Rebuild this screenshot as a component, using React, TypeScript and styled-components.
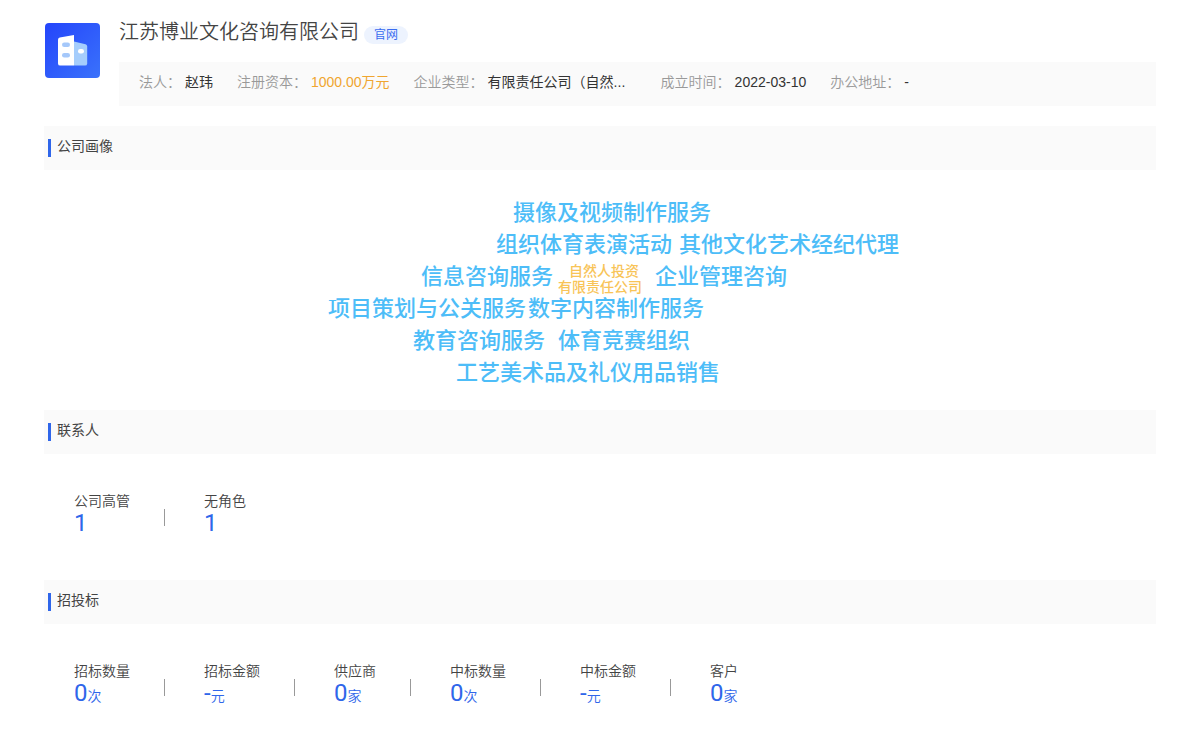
import React from "react";
import styled, { createGlobalStyle } from "styled-components";

const GlobalStyle = createGlobalStyle`
  * { box-sizing: border-box; }
  body {
    margin: 0;
    background: #fff;
    color: #444;
    font-family: "Liberation Sans", "Noto Sans CJK SC", sans-serif;
    font-size: 14px;
    line-height: 20px;
  }
  h1, h2, dl, dt, dd { margin: 0; font-weight: inherit; }
`;

const Page = styled.main`
  padding: 18px 44px 0;
`;

const Header = styled.header`
  display: flex;
  gap: 19px;
  padding-left: 1px;
  margin-bottom: 20px;
`;

const Logo = styled.svg`
  flex: none;
  width: 55px;
  height: 55px;
  margin-top: 5px;
`;

const HeaderBody = styled.div`
  flex: 1;
  min-width: 0;
`;

const TitleRow = styled.div`
  display: flex;
  align-items: flex-start;
  gap: 5px;
  height: 44px;
`;

const Title = styled.h1`
  font-size: 20px;
  line-height: 28px;
  font-weight: 350;
`;

const SiteLink = styled.a`
  margin-top: 8px;
  padding: 0 10px;
  border-radius: 9px;
  background: #edf3fe;
  color: #3a6cf0;
  font-size: 12px;
  line-height: 18px;
  height: 18px;
  text-decoration: none;
`;

const InfoBar = styled.dl`
  display: flex;
  flex-wrap: wrap;
  column-gap: 24px;
  padding: 10px 20px 14px;
  background: #fafafa;
`;

const InfoItem = styled.div`
  display: flex;
  gap: 4px;
`;

const InfoLabel = styled.dt`
  color: #999;
  font-weight: 350;
`;

const InfoValue = styled.dd<{ $accent?: boolean; $wide?: boolean }>`
  color: ${(p) => (p.$accent ? "#f0a52f" : "#333")};
  min-width: ${(p) => (p.$wide ? "149px" : "0")};
  white-space: nowrap;
`;

const SectionHead = styled.div`
  display: flex;
  align-items: flex-start;
  gap: 6px;
  height: 44px;
  padding: 10px 4px;
  background: #fafafa;
  &::before {
    content: "";
    width: 3px;
    height: 18px;
    margin-top: 3px;
    background: #2f66ea;
  }
`;

const SectionTitle = styled.h2`
  font-size: 14px;
`;

const Cloud = styled.div`
  position: relative;
  height: 240px;
`;

/* Words are placed by their offset from the centre of the cloud. */
const Word = styled.span<{ $x: number; $y: number }>`
  position: absolute;
  left: calc(50% + ${(p) => p.$x}px);
  top: ${(p) => p.$y}px;
  color: #4dbdf8;
  font-size: 22px;
  line-height: 32px;
  font-weight: 500;
  white-space: nowrap;
`;

const CoreWord = styled(Word)`
  color: #f8c458;
  font-size: 14px;
  line-height: 16px;
`;

const Stats = styled.dl`
  display: flex;
  padding: 37px 30px 45px;
`;

const Stat = styled.div`
  display: flex;
  & + &::before {
    content: "";
    width: 1px;
    height: 17px;
    margin: 18px 39px 0 34px;
    background: #999;
  }
`;

const StatLabel = styled.dt`
  font-weight: 350;
`;

const StatValue = styled.dd`
  height: 24px;
  color: #2f66ea;
  font-family: Roboto, "Noto Sans CJK SC", sans-serif;
  font-weight: 350;
  line-height: 24px;
`;

const Figure = styled.span`
  font-size: 24px;
  font-weight: 400;
`;

type StatData = { label: string; value: string; unit?: string };

const info = [
  { label: "法人", value: "赵玮" },
  { label: "注册资本", value: "1000.00万元", accent: true },
  { label: "企业类型", value: "有限责任公司（自然...", wide: true },
  { label: "成立时间", value: "2022-03-10" },
  { label: "办公地址", value: "-" },
];

const words = [
  { text: "摄像及视频制作服务", x: -87, y: 27 },
  { text: "组织体育表演活动", x: -104, y: 59 },
  { text: "其他文化艺术经纪代理", x: 79, y: 59 },
  { text: "信息咨询服务", x: -179, y: 91 },
  { text: "企业管理咨询", x: 55, y: 91 },
  { text: "项目策划与公关服务", x: -272, y: 123 },
  { text: "数字内容制作服务", x: -72, y: 123 },
  { text: "教育咨询服务", x: -187, y: 155 },
  { text: "体育竞赛组织", x: -42, y: 155 },
  { text: "工艺美术品及礼仪用品销售", x: -144, y: 187 },
];

const coreWords = [
  { text: "自然人投资", x: -31, y: 93 },
  { text: "有限责任公司", x: -42, y: 109 },
];

const contacts: StatData[] = [
  { label: "公司高管", value: "1" },
  { label: "无角色", value: "1" },
];

const bids: StatData[] = [
  { label: "招标数量", value: "0", unit: "次" },
  { label: "招标金额", value: "-", unit: "元" },
  { label: "供应商", value: "0", unit: "家" },
  { label: "中标数量", value: "0", unit: "次" },
  { label: "中标金额", value: "-", unit: "元" },
  { label: "客户", value: "0", unit: "家" },
];

function StatList({ items }: { items: StatData[] }) {
  return (
    <Stats>
      {items.map((s) => (
        <Stat key={s.label}>
          <div>
            <StatLabel>{s.label}</StatLabel>
            <StatValue>
              <Figure>{s.value}</Figure>
              {s.unit}
            </StatValue>
          </div>
        </Stat>
      ))}
    </Stats>
  );
}

function CompanyLogo() {
  return (
    <Logo viewBox="0 0 55 55" aria-hidden="true">
      <defs>
        <linearGradient id="tile" x1="0" y1="0" x2="1" y2="1">
          <stop offset="0" stopColor="#2445fb" />
          <stop offset="1" stopColor="#3a72fb" />
        </linearGradient>
      </defs>
      <rect width="55" height="55" rx="4" fill="url(#tile)" />
      <path d="M29 18.500l11.500 2.700q1.700.5 1.700 2.200v17q0 2.200-2.200 2.200H29z" fill="#a5cdfc" />
      <path d="M14.800 14.600L29 12v30.600H15.200q-2.200 0-2.200-2.200V16.800q0-1.800 1.800-2.200z" fill="#fff" />
      <rect x="17" y="19.500" width="8" height="4.500" rx="2.200" fill="#a5c8fa" />
      <rect x="17" y="30" width="8" height="4.500" rx="2.200" fill="#a5c8fa" />
      <rect x="33" y="26" width="6" height="4.500" rx="2.200" fill="#fff" />
    </Logo>
  );
}

export default function App() {
  return (
    <>
      <GlobalStyle />
      <Page>
        <Header>
          <CompanyLogo />
          <HeaderBody>
            <TitleRow>
              <Title>江苏博业文化咨询有限公司</Title>
              <SiteLink href="#">官网</SiteLink>
            </TitleRow>
            <InfoBar>
              {info.map((i) => (
                <InfoItem key={i.label}>
                  <InfoLabel>{i.label}：</InfoLabel>
                  <InfoValue $accent={i.accent} $wide={i.wide}>
                    {i.value}
                  </InfoValue>
                </InfoItem>
              ))}
            </InfoBar>
          </HeaderBody>
        </Header>

        <section>
          <SectionHead>
            <SectionTitle>公司画像</SectionTitle>
          </SectionHead>
          <Cloud>
            {words.map((w) => (
              <Word key={w.text} $x={w.x} $y={w.y}>
                {w.text}
              </Word>
            ))}
            {coreWords.map((w) => (
              <CoreWord key={w.text} $x={w.x} $y={w.y}>
                {w.text}
              </CoreWord>
            ))}
          </Cloud>
        </section>

        <section>
          <SectionHead>
            <SectionTitle>联系人</SectionTitle>
          </SectionHead>
          <StatList items={contacts} />
        </section>

        <section>
          <SectionHead>
            <SectionTitle>招投标</SectionTitle>
          </SectionHead>
          <StatList items={bids} />
        </section>
      </Page>
    </>
  );
}
